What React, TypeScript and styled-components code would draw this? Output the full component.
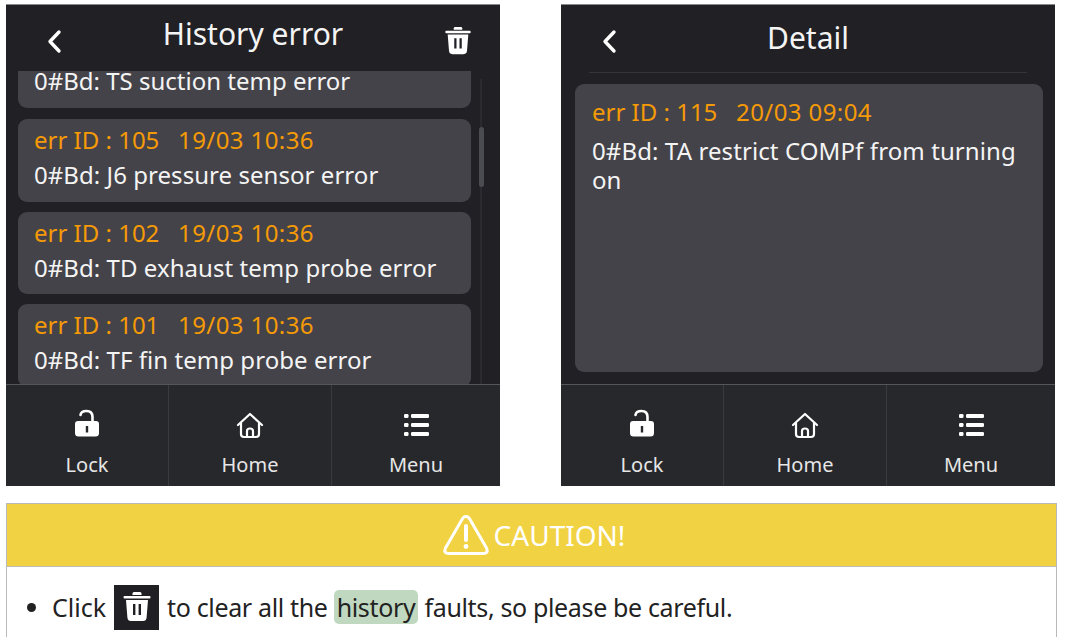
import React, { FC } from 'react';
import styled, { createGlobalStyle } from 'styled-components';

const GlobalStyle = createGlobalStyle`
  html, body {
    margin: 0;
    padding: 0;
    background: #fff;
    overflow: hidden;
  }
  body {
    font-family: "Noto Sans", sans-serif;
  }
`

const Page = styled.div`
  width: 1079px;
  height: 638px;
  overflow: hidden;
  padding: 4px 0 0 6px;
  box-sizing: border-box;
`
const Screens = styled.div`
  display: flex;
  gap: 61px;
`
const Screen = styled.div`
  width: 494px;
  height: 482px;
  background: #202025;
  color: #f4f4f4;
  display: flex;
  flex-direction: column;
  border-top: 1px solid #88888c;
  box-sizing: border-box;
`
const Header = styled.div<{ $divider?: boolean }>`
  position: relative;
  height: 66px;
  flex-shrink: 0;
  display: flex;
  align-items: center;
  justify-content: center;
  &::after {
    content: '';
    display: ${p => (p.$divider ? 'block' : 'none')};
    position: absolute;
    left: 28px;
    right: 28px;
    bottom: -2px;
    height: 1px;
    background: #34343a;
  }
`
const Title = styled.div<{ $top: number }>`
  font-size: 30px;
  line-height: 40px;
  margin-top: ${p => p.$top}px;
`
const BackButton = styled.div`
  position: absolute;
  left: 38px;
  top: 22px;
  width: 22px;
  height: 28px;
`
const TrashButton = styled.div`
  position: absolute;
  left: 437px;
  top: 21px;
  width: 30px;
  height: 32px;
`
const ListArea = styled.div`
  position: relative;
  flex: 1;
  overflow: hidden;
  padding: 0 29px 0 12px;
`
const CardList = styled.div`
  display: flex;
  flex-direction: column;
  gap: 10px;
`
const Card = styled.div`
  background: #444349;
  border-radius: 9px;
  height: 82.5px;
  padding: 4px 16px 0;
  box-sizing: border-box;
  flex-shrink: 0;
`
const ClippedCard = styled.div`
  background: #444349;
  border-radius: 0 0 9px 9px;
  height: 37px;
  margin-bottom: 1px;
  padding: 0 16px;
  box-sizing: border-box;
  flex-shrink: 0;
  font-size: 24px;
  line-height: 20px;
`
const CardHead = styled.div`
  color: #f59a07;
  font-size: 24px;
  line-height: 33px;
  white-space: pre;
`
const CardDate = styled.span`
  letter-spacing: 0.4px;
`
const CardText = styled.div`
  font-size: 24px;
  line-height: 36px;
  letter-spacing: 0.05px;
  margin-top: 1px;
`
const ScrollTrack = styled.div`
  position: absolute;
  left: 474px;
  top: 8px;
  bottom: 0;
  width: 2px;
  background: #2a2a2f;
`
const ScrollThumb = styled.div`
  position: absolute;
  left: 473px;
  top: 56px;
  width: 5px;
  height: 60px;
  border-radius: 3px;
  background: #4b4b52;
`
const DetailArea = styled.div`
  flex: 1;
  padding: 13px 12px 12px 14px;
  display: flex;
`
const DetailCard = styled.div`
  flex: 1;
  background: #444349;
  border-radius: 9px;
  padding: 11px 17px;
`
const DetailText = styled.div`
  font-size: 24px;
  line-height: 29px;
  letter-spacing: 0.1px;
  margin-top: 8px;
`
const Footer = styled.div`
  height: 102px;
  flex-shrink: 0;
  display: flex;
  background: #27282c;
  border-top: 1px solid #55565a;
  box-sizing: border-box;
`
const FooterItem = styled.div<{ $width: number }>`
  width: ${p => p.$width}px;
  display: flex;
  flex-direction: column;
  align-items: center;
  padding-top: 24px;
  box-sizing: border-box;
  border-right: 1px solid #3a3b3f;
  &:last-child {
    border-right: 0;
  }
`
const IconBox = styled.div`
  width: 32px;
  height: 32px;
  margin-bottom: 10px;
`
const FooterLabel = styled.div`
  font-size: 20px;
  line-height: 28px;
  color: #e6e6e6;
`
const Caution = styled.div`
  width: 1051px;
  margin-top: 17px;
  border: 1px solid #b9b9b9;
  border-bottom: 0;
  box-sizing: border-box;
`
const CautionBar = styled.div`
  height: 63px;
  padding-left: 4px;
  background: #f1d243;
  border-bottom: 1px solid #bdbdb5;
  box-sizing: border-box;
  display: flex;
  align-items: center;
  justify-content: center;
  gap: 4px;
  color: #fff;
  font-size: 28px;
`
const CautionBody = styled.ul`
  margin: 0;
  padding: 18px 0 0 45px;
  height: 70px;
  box-sizing: border-box;
  color: #222;
  font-size: 25px;
`
const CautionItem = styled.li`
  line-height: 44px;
`
const InlineRow = styled.span`
  display: inline-flex;
  align-items: center;
  gap: 8px;
  vertical-align: top;
  height: 44px;
  white-space: pre;
`
const TrashChip = styled.span`
  width: 45px;
  height: 45px;
  background: #1f1f24;
  display: inline-flex;
  align-items: center;
  justify-content: center;
`
const Sentence = styled.span`
  letter-spacing: -0.35px;
`
const Mark = styled.span`
  background: #bfd8bf;
  border-radius: 5px;
  padding: 0 3px;
`

const BackIcon: FC = () => (
    <svg width="22" height="28" viewBox="0 0 22 28" fill="none">
        <path d="M15 5 L6 14.5 L15 24" stroke="#fff" strokeWidth="3.4" strokeLinecap="round" strokeLinejoin="round" />
    </svg>
)

const TrashIcon: FC<{ size: number }> = ({ size }) => (
    <svg width={size} height={size} viewBox="0 0 30 32" fill="#fff">
        <path d="M10.5 2.5 Q10.5 1 12 1 H18 Q19.5 1 19.5 2.5 V4 H10.5 Z" />
        <rect x="1.5" y="5" width="27" height="2.6" rx="1" />
        <path fillRule="evenodd" d="M4 9 H26 L24.6 26.5 Q24.3 30 21 30 H9 Q5.7 30 5.4 26.5 Z M11 13 V24 H13.4 V13 Z M16.6 13 V24 H19 V13 Z" />
    </svg>
)

const LockIcon: FC = () => (
    <svg width="32" height="32" viewBox="0 0 32 32" fill="none">
        <path d="M9.5 6 Q10 2 15.5 2 Q21.5 2 21.5 8 V13" stroke="#fff" strokeWidth="2.6" strokeLinecap="round" />
        <path fillRule="evenodd" fill="#fff" d="M7 12 H25 Q28 12 28 15 V24 Q28 27.5 24.5 27.5 H7.5 Q4 27.5 4 24 V15 Q4 12 7 12 Z M14.8 17 V23.5 H17.2 V17 Z" />
    </svg>
)

const HomeIcon: FC = () => (
    <svg width="32" height="32" viewBox="0 0 32 32" fill="none" stroke="#fff" strokeWidth="2.2" strokeLinecap="round" strokeLinejoin="round">
        <path d="M4 16 L16 5 L28 16" />
        <path d="M7 14 V25 Q7 28 10 28 H22 Q25 28 25 25 V14" />
        <path d="M13 28 V22 Q13 19.5 16 19.5 Q19 19.5 19 22 V28" />
    </svg>
)

const MenuIcon: FC = () => (
    <svg width="32" height="32" viewBox="0 0 32 32" fill="#fff">
        <rect x="4" y="5" width="4.5" height="4" rx="1.2" />
        <rect x="11" y="5" width="18" height="4" rx="1.2" />
        <rect x="4" y="14" width="4.5" height="4" rx="1.2" />
        <rect x="11" y="14" width="18" height="4" rx="1.2" />
        <rect x="4" y="23" width="4.5" height="4" rx="1.2" />
        <rect x="11" y="23" width="18" height="4" rx="1.2" />
    </svg>
)

const WarningIcon: FC = () => (
    <svg width="48" height="44" viewBox="0 0 48 44" fill="none">
        <path d="M24 3.5 Q21.5 3.5 20 6.5 L3.5 35 Q1 40.5 7 40.5 H41 Q47 40.5 44.5 35 L28 6.5 Q26.5 3.5 24 3.5 Z" stroke="#fff" strokeWidth="3" strokeLinejoin="round" />
        <path d="M24 13 V27" stroke="#fff" strokeWidth="4" strokeLinecap="round" />
        <circle cx="24" cy="33.5" r="2.4" fill="#fff" />
    </svg>
)

const BottomBar: FC = () => (
    <Footer>
        <FooterItem $width={163}>
            <IconBox><LockIcon /></IconBox>
            <FooterLabel>Lock</FooterLabel>
        </FooterItem>
        <FooterItem $width={163}>
            <IconBox><HomeIcon /></IconBox>
            <FooterLabel>Home</FooterLabel>
        </FooterItem>
        <FooterItem $width={168}>
            <IconBox><MenuIcon /></IconBox>
            <FooterLabel>Menu</FooterLabel>
        </FooterItem>
    </Footer>
)

const errors = [
    { id: 'err ID : 105', date: '19/03 10:36', text: '0#Bd: J6 pressure sensor error' },
    { id: 'err ID : 102', date: '19/03 10:36', text: '0#Bd: TD exhaust temp probe error' },
    { id: 'err ID : 101', date: '19/03 10:36', text: '0#Bd: TF fin temp probe error' },
]

const App: FC = () => {
    return (
        <Page>
            <GlobalStyle />
            <Screens>
                <Screen>
                    <Header>
                        <BackButton><BackIcon /></BackButton>
                        <Title $top={-8}>History error</Title>
                        <TrashButton><TrashIcon size={30} /></TrashButton>
                    </Header>
                    <ListArea>
                        <CardList>
                            <ClippedCard>0#Bd: TS suction temp error</ClippedCard>
                            {errors.map(item => (
                                <Card key={item.id}>
                                    <CardHead>{item.id}   <CardDate>{item.date}</CardDate></CardHead>
                                    <CardText>{item.text}</CardText>
                                </Card>
                            ))}
                        </CardList>
                        <ScrollTrack />
                        <ScrollThumb />
                    </ListArea>
                    <BottomBar />
                </Screen>
                <Screen>
                    <Header $divider>
                        <BackButton><BackIcon /></BackButton>
                        <Title $top={0}>Detail</Title>
                    </Header>
                    <DetailArea>
                        <DetailCard>
                            <CardHead>err ID : 115   <CardDate>20/03 09:04</CardDate></CardHead>
                            <DetailText>0#Bd: TA restrict COMPf from turning on</DetailText>
                        </DetailCard>
                    </DetailArea>
                    <BottomBar />
                </Screen>
            </Screens>
            <Caution>
                <CautionBar>
                    <WarningIcon />
                    CAUTION!
                </CautionBar>
                <CautionBody>
                    <CautionItem>
                        <InlineRow>
                            Click
                            <TrashChip><TrashIcon size={32} /></TrashChip>
                            <Sentence>to clear all the <Mark>history</Mark> faults, so please be careful.</Sentence>
                        </InlineRow>
                    </CautionItem>
                </CautionBody>
            </Caution>
        </Page>
    );
};

export default App;
